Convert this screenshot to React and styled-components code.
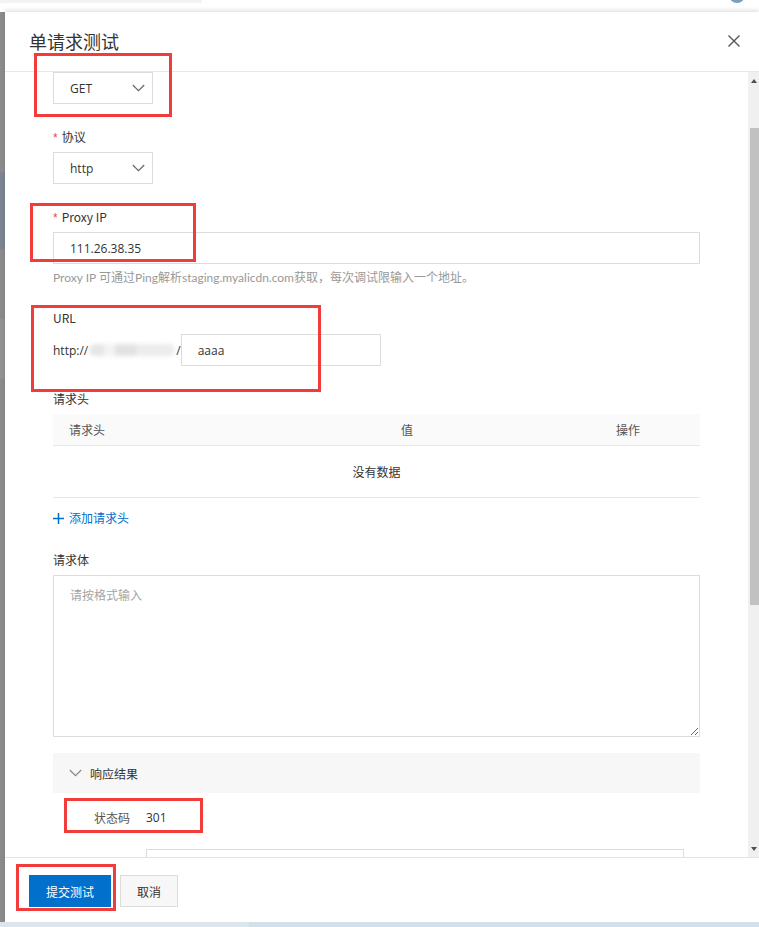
import React from "react";
import styled, { createGlobalStyle } from "styled-components";

const GlobalStyle = createGlobalStyle`
  html, body {
    margin: 0;
    padding: 0;
    background: #ffffff;
  }
  * {
    box-sizing: border-box;
  }
  body {
    font-family: "Open Sans", "Noto Sans CJK SC", sans-serif;
    font-size: 12px;
    color: #333;
  }
`;

const Root = styled.div`
  position: relative;
  width: 759px;
  height: 927px;
  display: flex;
  flex-direction: column;
  overflow: hidden;
`;

const TopStrip = styled.div`
  height: 12px;
  flex: none;
  display: flex;
  justify-content: space-between;
  align-items: flex-start;
  background: #fff;
`;

const TopBand = styled.div`
  width: 202px;
  height: 3px;
  background: #f3f3f3;
`;

const Avatar = styled.div`
  width: 16px;
  height: 16px;
  margin: -13px 14px 0 0;
  border-radius: 50%;
  background: #7c9dbb;
`;

const Main = styled.div`
  flex: 1;
  min-height: 0;
  display: flex;
`;

const Backdrop = styled.div`
  width: 5px;
  flex: none;
  background: #8b8b8b;
  display: flex;
  flex-direction: column;
  padding-top: 160px;
`;

const BackdropPatch = styled.div`
  height: ${({ h }) => h}px;
  margin-top: ${({ gap }) => gap}px;
  background: ${({ tone }) => tone};
`;

const Drawer = styled.div`
  flex: 1;
  display: flex;
  flex-direction: column;
  background: #fff;
  box-shadow: 0 -2px 4px rgba(0, 0, 0, 0.12);
`;

const Header = styled.div`
  height: 60px;
  flex: none;
  display: flex;
  align-items: center;
  justify-content: space-between;
  padding: 0 19px 2px 24px;
  border-bottom: 1px solid #e8e8e8;
`;

const Title = styled.h1`
  margin: 0;
  font-family: "Noto Sans CJK SC", sans-serif;
  font-size: 18px;
  font-weight: 400;
  color: #333;
  line-height: 24px;
`;

const CloseIcon = styled.svg`
  width: 12px;
  height: 12px;
  stroke: #555;
  stroke-width: 1.4;
`;

const BodyRow = styled.div`
  flex: 1;
  min-height: 0;
  display: flex;
`;

const Scroll = styled.div`
  flex: 1;
  overflow: hidden;
  padding: 0 48px;
`;

const ScrollBar = styled.div`
  width: 11px;
  flex: none;
  background: #f0f0f0;
  display: flex;
  flex-direction: column;
  align-items: flex-end;
`;

const Arrow = styled.div`
  width: 0;
  height: 0;
  margin: ${({ up }) => (up ? "7px 2px 0 0" : "auto 2px 6px 0")};
  border-left: 3.5px solid transparent;
  border-right: 3.5px solid transparent;
  ${({ up }) =>
    up ? "border-bottom: 4px solid #505050;" : "border-top: 4px solid #505050;"}
`;

const Thumb = styled.div`
  width: 9px;
  height: 477px;
  margin-top: 45px;
  background: #c1c1c1;
`;

const Item = styled.div`
  margin-top: ${({ mt }) => mt || 0}px;
`;

const Label = styled.div`
  font-family: "Noto Sans CJK SC", sans-serif;
  font-size: 12px;
  line-height: 20px;
  height: 20px;
  color: #333;
  margin-bottom: ${({ mb }) => mb || 5}px;
`;

const Star = styled.span`
  color: #e5483d;
  margin-right: 4px;
  font-family: "Liberation Sans", sans-serif;
`;

const SelectBox = styled.div`
  width: 100px;
  height: 32px;
  border: 1px solid #dcdcdc;
  display: flex;
  align-items: center;
  justify-content: space-between;
  padding: 0 7px 0 16px;
  color: #333;
  font-size: 12px;
`;

const Chevron = styled.svg`
  width: 13px;
  height: 8px;
  fill: none;
  stroke: ${({ color }) => color || "#666"};
  stroke-width: 1.2;
`;

const InputBox = styled.div`
  width: ${({ w }) => (w ? `${w}px` : "100%")};
  height: 32px;
  border: 1px solid #dcdcdc;
  display: flex;
  align-items: center;
  padding: 0 16px;
  color: #333;
  font-size: 12px;
`;

const Help = styled.div`
  margin-top: 4px;
  line-height: 20px;
  color: #999;
  font-size: 12px;
  font-family: "Lato", "Noto Sans CJK SC", sans-serif;
`;

const UrlRow = styled.div`
  display: flex;
  align-items: center;
`;

const UrlPrefix = styled.span`
  color: #333;
  display: flex;
  align-items: center;
`;

/* redacted host name: a soft smudge, as in the screenshot */
const Redacted = styled.span`
  display: inline-block;
  width: 86px;
  height: 12px;
  margin: 0 1px;
  border-radius: 6px;
  background: linear-gradient(
    90deg,
    #e6e6e6 0 18%,
    #f3f3f3 18% 30%,
    #e2e2e2 30% 55%,
    #ececec 55% 100%
  );
  filter: blur(2px);
`;

const Table = styled.div`
  width: 100%;
`;

const TableHead = styled.div`
  display: grid;
  grid-template-columns: 332px 215px 100px;
  height: 32px;
  align-items: center;
  background: #fafafa;
  border-bottom: 1px solid #e8e8e8;
  color: #555;
  font-family: "Noto Sans CJK SC", sans-serif;
`;

const HeadCell = styled.div`
  padding-left: 16px;
`;

const EmptyRow = styled.div`
  height: 52px;
  display: flex;
  align-items: center;
  justify-content: center;
  border-bottom: 1px solid #e8e8e8;
  color: #333;
  font-family: "Noto Sans CJK SC", sans-serif;
`;

const AddLink = styled.div`
  margin-top: 10px;
  line-height: 20px;
  color: #0070cc;
  display: flex;
  align-items: center;
  gap: 5px;
  font-family: "Noto Sans CJK SC", sans-serif;
`;

const PlusIcon = styled.svg`
  width: 11px;
  height: 11px;
  stroke: #0070cc;
  stroke-width: 1.5;
`;

const TextArea = styled.textarea`
  display: block;
  width: 100%;
  height: 162px;
  border: 1px solid #dcdcdc;
  padding: 10px 16px;
  margin: 0;
  font-family: "Noto Sans CJK SC", sans-serif;
  font-size: 12px;
  line-height: 18px;
  color: #333;
  outline: none;
  resize: vertical;

  &::placeholder {
    color: #a5a5a5;
  }
`;

const CollapseHead = styled.div`
  margin-top: 16px;
  height: 40px;
  background: #f7f7f7;
  display: flex;
  align-items: center;
  padding-left: 16px;
  gap: 8px;
  color: #333;
  font-family: "Noto Sans CJK SC", sans-serif;
`;

const ResultRow = styled.div`
  display: grid;
  grid-template-columns: 93px 1fr;
  margin-top: 15px;
  line-height: 20px;
`;

const ResultLabel = styled.div`
  text-align: right;
  padding-right: 16px;
  color: #555;
  font-family: "Noto Sans CJK SC", sans-serif;
`;

const ResultValue = styled.div`
  color: #333;
`;

const ResultBox = styled.div`
  margin: 21px 16px 0 93px;
  height: 60px;
  border: 1px solid #dcdcdc;
`;

const Footer = styled.div`
  height: 65px;
  flex: none;
  border-top: 1px solid #e3e3e3;
  display: flex;
  align-items: flex-start;
  gap: 9px;
  padding: 17px 24px 0;
`;

const Button = styled.button`
  height: 32px;
  padding: 0 16px;
  border: 1px solid ${({ primary }) => (primary ? "#0070cc" : "#dcdcdc")};
  background: ${({ primary }) => (primary ? "#0070cc" : "#f7f7f7")};
  color: ${({ primary }) => (primary ? "#fff" : "#333")};
  font-family: "Noto Sans CJK SC", sans-serif;
  font-size: 12px;
  cursor: pointer;
`;

const BottomStrip = styled.div`
  height: 5px;
  flex: none;
  background: linear-gradient(90deg, #dae5ec 0 249px, #d1e0ea 249px);
`;

const Mark = styled.div`
  position: absolute;
  left: ${({ x }) => x}px;
  top: ${({ y }) => y}px;
  width: ${({ w }) => w}px;
  height: ${({ h }) => h}px;
  border: 3px solid #f23b3b;
  pointer-events: none;
`;

function Down({ color }) {
  return (
    <Chevron viewBox="0 0 13 8" color={color}>
      <path d="M0.8 1 L6.5 6.6 L12.2 1" />
    </Chevron>
  );
}

const marks = [
  { x: 34, y: 53, w: 138, h: 64 },
  { x: 30, y: 203, w: 166, h: 59 },
  { x: 31, y: 305, w: 290, h: 87 },
  { x: 64, y: 798, w: 139, h: 35 },
  { x: 16, y: 864, w: 100, h: 47 },
];

export default function App() {
  return (
    <>
      <GlobalStyle />
      <Root>
        <TopStrip>
          <TopBand />
          <Avatar />
        </TopStrip>
        <Main>
          <Backdrop>
            <BackdropPatch h={77} gap={0} tone="#7e8590" />
            <BackdropPatch h={60} gap={70} tone="#929292" />
          </Backdrop>
          <Drawer>
            <Header>
              <Title>单请求测试</Title>
              <CloseIcon viewBox="0 0 12 12">
                <path d="M0.5 0.5 L11.5 11.5 M11.5 0.5 L0.5 11.5" />
              </CloseIcon>
            </Header>
            <BodyRow>
              <Scroll>
                <Item>
                  <SelectBox>
                    GET
                    <Down />
                  </SelectBox>
                </Item>
                <Item mt={23}>
                  <Label>
                    <Star>*</Star>协议
                  </Label>
                  <SelectBox>
                    http
                    <Down />
                  </SelectBox>
                </Item>
                <Item mt={23}>
                  <Label>
                    <Star>*</Star>Proxy IP
                  </Label>
                  <InputBox>111.26.38.35</InputBox>
                  <Help>
                    Proxy IP 可通过Ping解析staging.myalicdn.com获取，每次调试限输入一个地址。
                  </Help>
                </Item>
                <Item mt={20}>
                  <Label mb={6}>URL</Label>
                  <UrlRow>
                    <UrlPrefix>
                      http://
                      <Redacted />/
                    </UrlPrefix>
                    <InputBox w={200}>aaaa</InputBox>
                  </UrlRow>
                </Item>
                <Item mt={23}>
                  <Label>请求头</Label>
                  <Table>
                    <TableHead>
                      <HeadCell>请求头</HeadCell>
                      <HeadCell>值</HeadCell>
                      <HeadCell>操作</HeadCell>
                    </TableHead>
                    <EmptyRow>没有数据</EmptyRow>
                  </Table>
                  <AddLink>
                    <PlusIcon viewBox="0 0 11 11">
                      <path d="M5.5 0 V11 M0 5.5 H11" />
                    </PlusIcon>
                    添加请求头
                  </AddLink>
                </Item>
                <Item mt={22}>
                  <Label>请求体</Label>
                  <TextArea placeholder="请按格式输入" />
                </Item>
                <CollapseHead>
                  <Down color="#888" />
                  响应结果
                </CollapseHead>
                <ResultRow>
                  <ResultLabel>状态码</ResultLabel>
                  <ResultValue>301</ResultValue>
                </ResultRow>
                <ResultBox />
              </Scroll>
              <ScrollBar>
                <Arrow up />
                <Thumb />
                <Arrow />
              </ScrollBar>
            </BodyRow>
            <Footer>
              <Button primary>提交测试</Button>
              <Button>取消</Button>
            </Footer>
          </Drawer>
        </Main>
        <BottomStrip />
        {marks.map((m, i) => (
          <Mark key={i} {...m} />
        ))}
      </Root>
    </>
  );
}
